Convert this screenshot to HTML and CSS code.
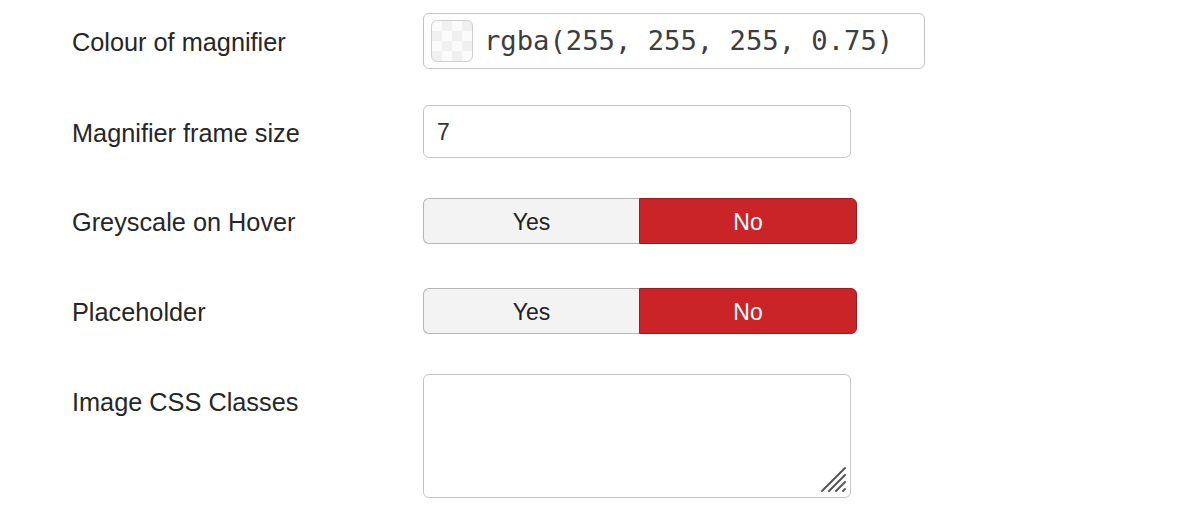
FILE: index.html
```html
<!DOCTYPE html>
<html lang="en">
<head>
<meta charset="utf-8">
<title>Magnifier options</title>
<link rel="stylesheet" href="styles.css">
</head>
<body>
<form class="form">
  <div class="row row-color">
    <label class="label">Colour of magnifier</label>
    <div class="control">
      <div class="color-field">
        <span class="swatch"></span>
        <span class="color-value">rgba(255, 255, 255, 0.75)</span>
      </div>
    </div>
  </div>
  <div class="row row-text">
    <label class="label">Magnifier frame size</label>
    <div class="control">
      <div class="text-field">7</div>
    </div>
  </div>
  <div class="row row-toggle">
    <label class="label">Greyscale on Hover</label>
    <div class="control">
      <div class="toggle">
        <span class="opt opt-yes">Yes</span>
        <span class="opt opt-no">No</span>
      </div>
    </div>
  </div>
  <div class="row row-toggle row-toggle2">
    <label class="label">Placeholder</label>
    <div class="control">
      <div class="toggle">
        <span class="opt opt-yes">Yes</span>
        <span class="opt opt-no">No</span>
      </div>
    </div>
  </div>
  <div class="row row-area">
    <label class="label">Image CSS Classes</label>
    <div class="control">
      <div class="area-field">
        <svg class="grip" width="28" height="28" viewBox="0 0 28 28">
          <g stroke="#555" stroke-width="2" stroke-linecap="round">
            <line x1="3" y1="26" x2="26" y2="3"/>
            <line x1="10" y1="26" x2="26" y2="10"/>
            <line x1="17" y1="26" x2="26" y2="17"/>
            <line x1="24" y1="26" x2="26" y2="24"/>
          </g>
        </svg>
      </div>
    </div>
  </div>
</form>
</body>
</html>
```

FILE: styles.css
```css
html, body {
  margin: 0;
  padding: 0;
  background: #ffffff;
}
body {
  font-family: "Liberation Sans", Arial, Helvetica, sans-serif;
  color: #222;
}
.form {
  display: flex;
  flex-direction: column;
  padding: 13px 0 0 72px;
}
.row {
  display: flex;
  align-items: flex-start;
}
.label {
  width: 351px;
  flex: none;
  font-size: 25.3px;
  line-height: 28px;
  color: #262626;
}
.row-color { margin-bottom: 36px; }
.row-color .label { padding-top: 15px; }
.row-text { margin-bottom: 40px; }
.row-text .label { padding-top: 14px; }
.row-toggle { margin-bottom: 44px; }
.row-toggle .label { padding-top: 10px; }
.row-toggle2 { margin-bottom: 40px; }
.row-area .label { padding-top: 14px; }

.color-field {
  box-sizing: border-box;
  width: 502px;
  height: 56px;
  border: 1px solid #c4c4c4;
  border-radius: 6px;
  display: flex;
  align-items: center;
  padding-left: 7px;
}
.swatch {
  box-sizing: border-box;
  width: 42px;
  height: 42px;
  border: 1px solid #cfcfcf;
  border-radius: 6px;
  background-color: #fbfbfb;
  background-image: conic-gradient(#f0f0f0 25%, #fbfbfb 0 50%, #f0f0f0 0 75%, #fbfbfb 0);
  background-size: 20px 20px;
  background-position: 0 0;
}
.color-value {
  margin-left: 11px;
  font-family: "DejaVu Sans Mono", "Liberation Mono", monospace;
  font-size: 27.2px;
  color: #3d3d3d;
  line-height: 30px;
}
.text-field {
  box-sizing: border-box;
  width: 428px;
  height: 53px;
  border: 1px solid #c4c4c4;
  border-radius: 6px;
  padding: 2px 0 0 13px;
  font-size: 23px;
  line-height: 49px;
  color: #333;
}
.toggle {
  display: flex;
  width: 434px;
  height: 46px;
}
.opt {
  box-sizing: border-box;
  flex: none;
  display: flex;
  align-items: center;
  justify-content: center;
  padding-top: 3px;
  font-size: 23px;
}
.opt-yes {
  width: 216px;
  background: #f3f3f3;
  border: 1px solid #b5b5b5;
  border-right: none;
  border-radius: 6px 0 0 6px;
  color: #222;
}
.opt-no {
  width: 218px;
  background: #ca2328;
  border: 1px solid #9e1a1e;
  border-radius: 0 6px 6px 0;
  color: #ffffff;
}
.area-field {
  box-sizing: border-box;
  position: relative;
  width: 428px;
  height: 124px;
  border: 1px solid #c4c4c4;
  border-radius: 6px;
}
.grip {
  position: absolute;
  right: 3px;
  bottom: 4px;
}
```
